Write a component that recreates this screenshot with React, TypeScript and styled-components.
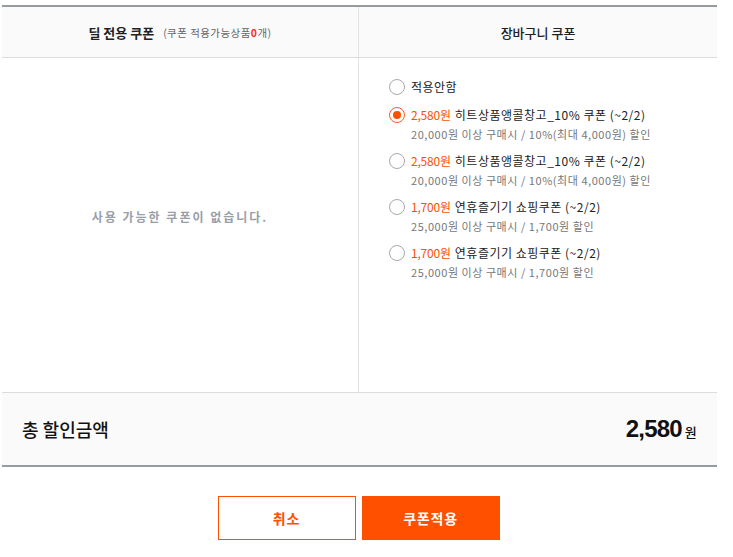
import React, { useState } from "react";
import styled, { createGlobalStyle } from "styled-components";

const Global = createGlobalStyle`
  html, body { margin: 0; padding: 0; background: #fff; }
  body { font-family: "Noto Sans CJK KR", "Noto Sans", "Liberation Sans", sans-serif; color: #222; }
  * { box-sizing: border-box; }
`;

const Page = styled.div`
  width: 715px;
  margin: 5px 0 0 2px;
`;

const Table = styled.div`
  border-top: 2px solid #959ba3;
  display: grid;
  grid-template-columns: 357px 1fr;
`;

const HeadCell = styled.div<{ $last?: boolean }>`
  height: 51px;
  background: #fafafa;
  border-bottom: 1px solid #dcdcdc;
  border-right: ${(p) => (p.$last ? "none" : "1px solid #e2e2e2")};
  display: flex;
  align-items: center;
  justify-content: center;
  gap: 9px;
  font-size: 13px;
  font-weight: 700;
  color: #222;
`;

const HeadPlain = styled.span`
  font-weight: 500;
`;

const HeadSub = styled.span`
  font-size: 10.5px;
  font-weight: 400;
  color: #666;
  letter-spacing: 0.45px;
`;

const Red = styled.b`
  color: #ff2a1a;
  font-weight: 700;
`;

const BodyCell = styled.div<{ $last?: boolean }>`
  height: 334px;
  border-right: ${(p) => (p.$last ? "none" : "1px solid #e2e2e2")};
`;

const Empty = styled(BodyCell)`
  display: flex;
  align-items: center;
  justify-content: center;
  padding-bottom: 18px;
  font-size: 12px;
  font-weight: 700;
  color: #9a9ea6;
  letter-spacing: 2px;
`;

const List = styled(BodyCell)`
  padding: 20px 0 0 30px;
  display: flex;
  flex-direction: column;
  gap: 9px;
`;

const Option = styled.label`
  display: grid;
  grid-template-columns: 16px 1fr;
  column-gap: 6px;
  row-gap: 1px;
  align-items: center;
  cursor: pointer;
  &:first-child {
    margin-bottom: 1px;
  }
`;

const Radio = styled.span<{ $on?: boolean }>`
  width: 16px;
  height: 16px;
  border-radius: 50%;
  border: 1px solid ${(p) => (p.$on ? "#ff5a1a" : "#a6a9ae")};
  display: flex;
  align-items: center;
  justify-content: center;
  background: #fff;
  &::after {
    content: "";
    width: 8px;
    height: 8px;
    border-radius: 50%;
    background: ${(p) => (p.$on ? "#ff5000" : "transparent")};
  }
`;

const Title = styled.span`
  font-size: 12px;
  color: #222;
  line-height: 18px;
  white-space: nowrap;
  letter-spacing: 0.5px;
`;

const Price = styled.span`
  color: #ff5000;
  margin-right: 4px;
  letter-spacing: -0.2px;
`;

const Desc = styled.span`
  grid-column: 2;
  font-size: 11px;
  color: #777;
  line-height: 18px;
  white-space: nowrap;
  letter-spacing: 0.55px;
`;

const Footer = styled.div`
  height: 75px;
  background: #fafafa;
  border-top: 1px solid #dcdcdc;
  border-bottom: 2px solid #959ba3;
  display: flex;
  align-items: center;
  justify-content: space-between;
  padding: 0 21px 0 20px;
`;

const TotalLabel = styled.span`
  font-size: 18px;
  font-weight: 500;
  color: #111;
`;

const TotalValue = styled.span`
  font-family: "Liberation Sans", "Noto Sans CJK KR", sans-serif;
  font-size: 24px;
  font-weight: 700;
  color: #111;
  letter-spacing: -0.8px;
`;

const Won = styled.span`
  font-family: "Noto Sans CJK KR", sans-serif;
  font-size: 13px;
  font-weight: 500;
  margin-left: 3px;
`;

const Buttons = styled.div`
  display: flex;
  justify-content: center;
  gap: 6px;
  margin-top: 29px;
  padding-right: 2px;
`;

const Button = styled.button<{ $primary?: boolean }>`
  width: 138px;
  height: 44px;
  border: 1px solid #ff5000;
  background: ${(p) => (p.$primary ? "#ff5000" : "#fff")};
  color: ${(p) => (p.$primary ? "#fff" : "#ff5000")};
  font-family: "Noto Sans CJK KR", sans-serif;
  font-size: 14px;
  font-weight: 700;
  letter-spacing: 0.8px;
  cursor: pointer;
`;

const coupons = [
  { price: "2,580원", name: "히트상품앵콜창고_10% 쿠폰 (~2/2)", desc: "20,000원 이상 구매시 / 10%(최대 4,000원) 할인" },
  { price: "2,580원", name: "히트상품앵콜창고_10% 쿠폰 (~2/2)", desc: "20,000원 이상 구매시 / 10%(최대 4,000원) 할인" },
  { price: "1,700원", name: "연휴즐기기 쇼핑쿠폰 (~2/2)", desc: "25,000원 이상 구매시 / 1,700원 할인" },
  { price: "1,700원", name: "연휴즐기기 쇼핑쿠폰 (~2/2)", desc: "25,000원 이상 구매시 / 1,700원 할인" },
];

export default function App() {
  const [sel, setSel] = useState(0);
  return (
    <Page>
      <Global />
      <Table>
        <HeadCell>
          <span>딜 전용 쿠폰</span>
          <HeadSub>
            (쿠폰 적용가능상품<Red>0</Red>개)
          </HeadSub>
        </HeadCell>
        <HeadCell $last>
          <HeadPlain>장바구니 쿠폰</HeadPlain>
        </HeadCell>
        <Empty>사용 가능한 쿠폰이 없습니다.</Empty>
        <List $last>
          <Option onClick={() => setSel(-1)}>
            <Radio $on={sel === -1} />
            <Title>적용안함</Title>
          </Option>
          {coupons.map((c, i) => (
            <Option key={i} onClick={() => setSel(i)}>
              <Radio $on={sel === i} />
              <Title>
                <Price>{c.price}</Price>
                {c.name}
              </Title>
              <Desc>{c.desc}</Desc>
            </Option>
          ))}
        </List>
      </Table>
      <Footer>
        <TotalLabel>총 할인금액</TotalLabel>
        <TotalValue>
          2,580<Won>원</Won>
        </TotalValue>
      </Footer>
      <Buttons>
        <Button>취소</Button>
        <Button $primary>쿠폰적용</Button>
      </Buttons>
    </Page>
  );
}
